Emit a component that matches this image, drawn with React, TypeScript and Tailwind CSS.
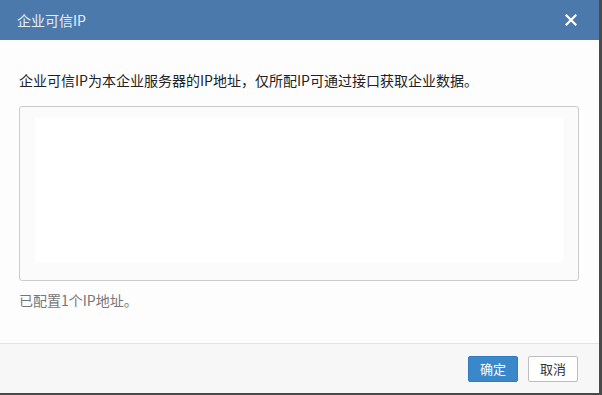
export default function App() {
  const font = { fontFamily: '"Noto Sans CJK SC", "Noto Sans", sans-serif' };
  return (
    <div className="flex h-[395px] w-[602px] bg-[#4a4a4a]" style={font}>
      <div className="flex h-[393px] w-[599px] flex-col bg-[#fdfdfd]">
        <div className="flex h-[40px] shrink-0 items-center justify-between bg-[#4c79ab] pl-[17px] pr-[22px]">
          <span className="text-[14px] text-[#e9eef5]">企业可信IP</span>
          <svg width="12" height="12" viewBox="0 0 12 12" className="text-white">
            <path d="M1.5 1.5 L10.5 10.5 M10.5 1.5 L1.5 10.5" stroke="currentColor" strokeWidth="2.2" strokeLinecap="square" />
          </svg>
        </div>
        <div className="flex flex-1 flex-col px-[19px] pt-[30px]">
          <p className="text-[14px] leading-[20px] text-[#222]">
            企业可信IP为本企业服务器的IP地址，仅所配IP可通过接口获取企业数据。
          </p>
          <div className="mt-[16px] h-[175px] w-[560px] rounded-[3px] border border-[#cbcbcb] bg-[#fbfbfb] pb-[17px] pl-[15px] pr-[15px] pt-[11px]">
            <div className="h-full w-full bg-white" />
          </div>
          <p className="mt-[9px] text-[14px] leading-[20px] text-[#777]">已配置1个IP地址。</p>
        </div>
        <div className="flex h-[50px] shrink-0 items-start justify-end gap-[10px] border-t border-[#e3e3e3] bg-[#f7f7f7] pr-[21px] pt-[12px]">
          <button className="h-[26px] w-[50px] rounded-[2px] border border-[#2f7cc0] bg-[#3a88c9] text-[13px] text-white">确定</button>
          <button className="h-[26px] w-[50px] rounded-[2px] border border-[#bdbdbd] bg-white text-[13px] text-[#333]">取消</button>
        </div>
      </div>
    </div>
  );
}
